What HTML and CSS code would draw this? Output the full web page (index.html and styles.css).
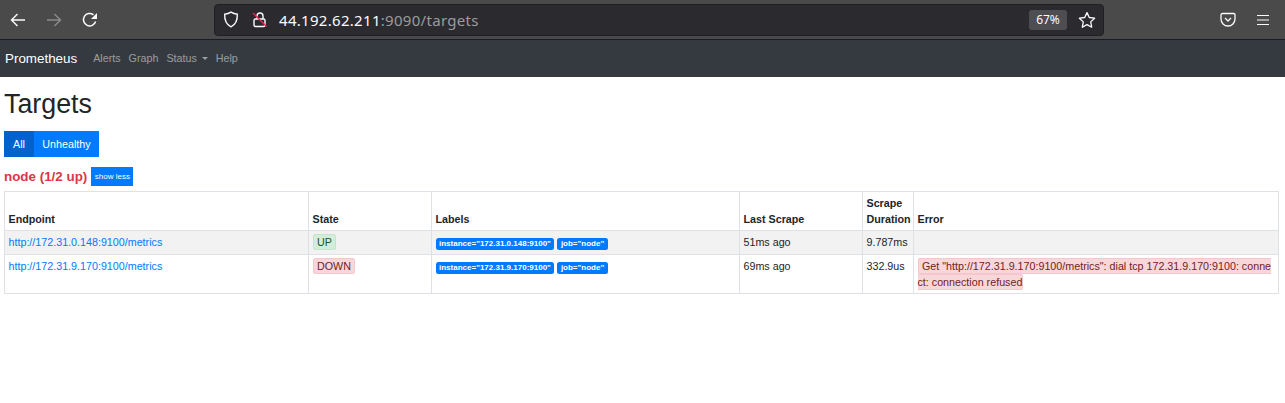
FILE: index.html
```html
<!DOCTYPE html>
<html lang="en">
<head>
<meta charset="utf-8">
<title>Prometheus Time Series Collection and Processing Server</title>
<link rel="stylesheet" href="styles.css">
</head>
<body>
<header class="toolbar">
  <div class="nav-icons">
    <svg class="ico" width="16" height="16" viewBox="0 0 16 16"><path d="M15 8H1.5M7.5 2 1.5 8l6 6" fill="none" stroke="#fbfbfe" stroke-width="1.4"/></svg>
    <svg class="ico ico-fwd" width="16" height="16" viewBox="0 0 16 16"><path d="M1 8h13.5M8.5 2l6 6-6 6" fill="none" stroke="#8b8b8b" stroke-width="1.4"/></svg>
    <svg class="ico ico-reload" width="16" height="16" viewBox="0 0 16 16"><path d="M13.6 9.5A6.2 6.2 0 1 1 11.5 2.8" fill="none" stroke="#fbfbfe" stroke-width="1.5"/><path d="M15 1v6H9z" fill="#fbfbfe"/></svg>
  </div>
  <div class="urlbar">
    <svg class="shield" width="16" height="17" viewBox="0 0 16 17"><path d="M8 1.2c2 1.3 4.200 1.900 6.300 2 .2 5.400-1.300 10.200-6.300 12.600C3 13.400 1.500 8.600 1.700 3.200 3.800 3.100 6 2.500 8 1.200z" fill="none" stroke="#fbfbfe" stroke-width="1.4"/></svg>
    <svg class="lock" width="16" height="17" viewBox="0 0 16 17"><path d="M5 8V5a3 3 0 0 1 6 0v3" fill="none" stroke="#fbfbfe" stroke-width="1.4"/><rect x="2" y="8" width="11" height="7.500" rx="1.500" fill="none" stroke="#fbfbfe" stroke-width="1.400"/><path d="M1 2l13.500 13.500" stroke="#e22850" stroke-width="1.500"/></svg>
    <span class="url"><span class="host">44.192.62.211</span>:9090/targets</span>
    <span class="zoom-level">67%</span>
    <svg class="star" width="18" height="18" viewBox="0 0 18 18"><path d="M9 1.600l2.300 4.900 5.300.7-3.900 3.700 1 5.300L9 13.600l-4.700 2.600 1-5.300-3.900-3.700 5.300-.7z" fill="none" stroke="#fbfbfe" stroke-width="1.300" stroke-linejoin="round"/></svg>
  </div>
  <div class="right-icons">
    <svg width="16" height="16" viewBox="0 0 16 16"><path d="M2.300 1.500h11.400c.7 0 1.300.6 1.300 1.300v4.200a7 7 0 0 1-14 0V2.800c0-.7.6-1.300 1.300-1.300z" fill="none" stroke="#fbfbfe" stroke-width="1.300"/><path d="M5 6l3 3 3-3" fill="none" stroke="#fbfbfe" stroke-width="1.300"/></svg>
    <svg class="menu" width="14" height="12" viewBox="0 0 14 12"><path d="M1 1.500h12M1 6h12M1 10.500h12" stroke="#fbfbfe" stroke-width="1.200"/></svg>
  </div>
</header>
<nav class="navbar">
  <a class="brand" href="#">Prometheus</a>
  <a class="nav-link" href="#">Alerts</a>
  <a class="nav-link" href="#">Graph</a>
  <a class="nav-link" href="#">Status <span class="caret"></span></a>
  <a class="nav-link" href="#">Help</a>
</nav>
<main class="content">
  <h1 class="title">Targets</h1>
  <div class="btn-group">
    <button class="btn btn-active">All</button>
    <button class="btn btn-plain">Unhealthy</button>
  </div>
  <div class="job">
    <a class="job-name" href="#">node (1/2 up)</a>
    <button class="btn-small">show less</button>
  </div>
  <table class="targets">
    <colgroup>
      <col class="c-endpoint"><col class="c-state"><col class="c-labels"><col class="c-scrape"><col class="c-duration"><col class="c-error">
    </colgroup>
    <thead>
      <tr><th>Endpoint</th><th>State</th><th>Labels</th><th>Last Scrape</th><th>Scrape Duration</th><th>Error</th></tr>
    </thead>
    <tbody>
      <tr class="odd">
        <td><a href="#">http://172.31.0.148:9100/metrics</a></td>
        <td><span class="alert alert-up">UP</span></td>
        <td><span class="badge">instance="172.31.0.148:9100"</span> <span class="badge">job="node"</span></td>
        <td>51ms ago</td>
        <td>9.787ms</td>
        <td></td>
      </tr>
      <tr class="row-tall">
        <td><a href="#">http://172.31.9.170:9100/metrics</a></td>
        <td><span class="alert alert-down">DOWN</span></td>
        <td><span class="badge">instance="172.31.9.170:9100"</span> <span class="badge">job="node"</span></td>
        <td>69ms ago</td>
        <td>332.9us</td>
        <td><span class="alert alert-down alert-error">Get "http://172.31.9.170:9100/metrics": dial tcp 172.31.9.170:9100: connect: connection refused</span></td>
      </tr>
    </tbody>
  </table>
</main>
</body>
</html>
```
FILE: styles.css
```css
* { box-sizing: border-box; }
html, body { margin: 0; padding: 0; }
body {
  background: #fff;
  color: #212529;
  font-family: "Liberation Sans", Arial, sans-serif;
  font-size: 10.72px;
  line-height: 16px;
  overflow: hidden;
}
a { text-decoration: none; }

/* Browser toolbar */
.toolbar {
  height: 40px;
  background: #4a4a4a;
  border-bottom: 1px solid #1c1b22;
  display: flex;
  align-items: center;
}
.nav-icons {
  display: flex;
  align-items: center;
  width: 214px;
  padding-left: 10px;
  gap: 20px;
}
.ico { display: block; flex: none; }
.ico-reload { margin-left: 0; }
.urlbar {
  width: 890px;
  height: 32px;
  margin-top: 0;
  background: #2b2a2f;
  border: 1px solid #1f1e23;
  border-radius: 4px;
  display: flex;
  align-items: center;
  padding-left: 8px;
  color: #9b9b9e;
}
.shield { flex: none; }
.lock { flex: none; margin-left: 13px; }
.url {
  margin-left: 11px;
  font-family: "Noto Sans", "Open Sans", sans-serif;
  font-size: 15px;
  letter-spacing: 0.3px;
  flex: 1;
}
.host { color: #fbfbfe; }
.zoom-level {
  width: 38px;
  height: 20px;
  background: #4e4d52;
  border-radius: 3px;
  color: #fbfbfe;
  font-family: "Noto Sans", "Open Sans", sans-serif;
  font-size: 12px;
  line-height: 20px;
  text-align: center;
}
.star { flex: none; margin: 0 7px 0 11px; }
.right-icons {
  display: flex;
  align-items: center;
  margin-left: 116px;
  gap: 20px;
}
.right-icons svg { display: block; flex: none; }

/* Prometheus navbar */
.navbar {
  height: 37px;
  background: #343a40;
  display: flex;
  align-items: center;
  padding-left: 5px;
}
.brand {
  color: #fff;
  font-size: 13.4px;
  margin-right: 16px;
  padding-top: 1px;
}
.nav-link {
  color: rgba(255, 255, 255, .5);
  margin-right: 8px;
  margin-top: -2px;
}
.caret {
  display: inline-block;
  width: 0;
  height: 0;
  margin-left: 2px;
  vertical-align: 2px;
  border-top: 3px solid rgba(255, 255, 255, .5);
  border-left: 3px solid transparent;
  border-right: 3px solid transparent;
}

/* Page */
.content { padding: 0 8px 0 4px; }
.title {
  margin: 0;
  padding-top: 11px;
  font-size: 26.8px;
  font-weight: 400;
  line-height: 32px;
}
.btn-group { display: flex; margin-top: 11px; }
.btn {
  height: 26px;
  border: 0;
  color: #fff;
  font: 10.72px "Liberation Sans", Arial, sans-serif;
  padding: 0;
}
.btn-active { width: 30px; background: #0062cc; }
.btn-plain { width: 65px; background: #007bff; }
.job {
  display: flex;
  align-items: center;
  margin-top: 10px;
  height: 19px;
}
.job-name {
  color: #dc3545;
  font-size: 13.4px;
  font-weight: 700;
}
.btn-small {
  width: 42px;
  height: 19px;
  margin-left: 4px;
  padding: 0;
  border: 0;
  background: #007bff;
  color: #fff;
  font: 8px "Liberation Sans", Arial, sans-serif;
}
.targets {
  width: 1274px;
  margin-top: 5px;
  border-collapse: collapse;
  table-layout: fixed;
}
.c-endpoint { width: 304px; }
.c-state { width: 123px; }
.c-labels { width: 308px; }
.c-scrape { width: 123px; }
.c-duration { width: 51px; }
.c-error { width: 365px; }
.targets th, .targets td {
  border: 1px solid #dee2e6;
  padding: 3px 3.5px;
  text-align: left;
  vertical-align: top;
}
.targets th {
  vertical-align: bottom;
  font-weight: 700;
  padding-bottom: 3px;
}
.targets td { height: 24px; }
.targets td a { color: #007bff; }
.odd { background: #f2f2f2; }
.row-tall td { height: 39px; }
.alert {
  padding: 1px 3.5px;
  border: 1px solid;
  border-radius: 2.500px;
}
.alert-up { background: #d4edda; border-color: #c3e6cb; color: #155724; }
.alert-down { background: #f8d7da; border-color: #f5c6cb; color: #721c24; }
.alert-error {
  word-break: break-all;
  line-height: 16px;
  padding-left: 3.500px;
  padding-right: 0;
  -webkit-box-decoration-break: slice;
  box-decoration-break: slice;
}
.badge {
  display: inline-block;
  padding: 0 3.500px;
  background: #007bff;
  color: #fff;
  border-radius: 2.500px;
  font-size: 8px;
  font-weight: 700;
  line-height: 12px;
  vertical-align: 0;
}
```
